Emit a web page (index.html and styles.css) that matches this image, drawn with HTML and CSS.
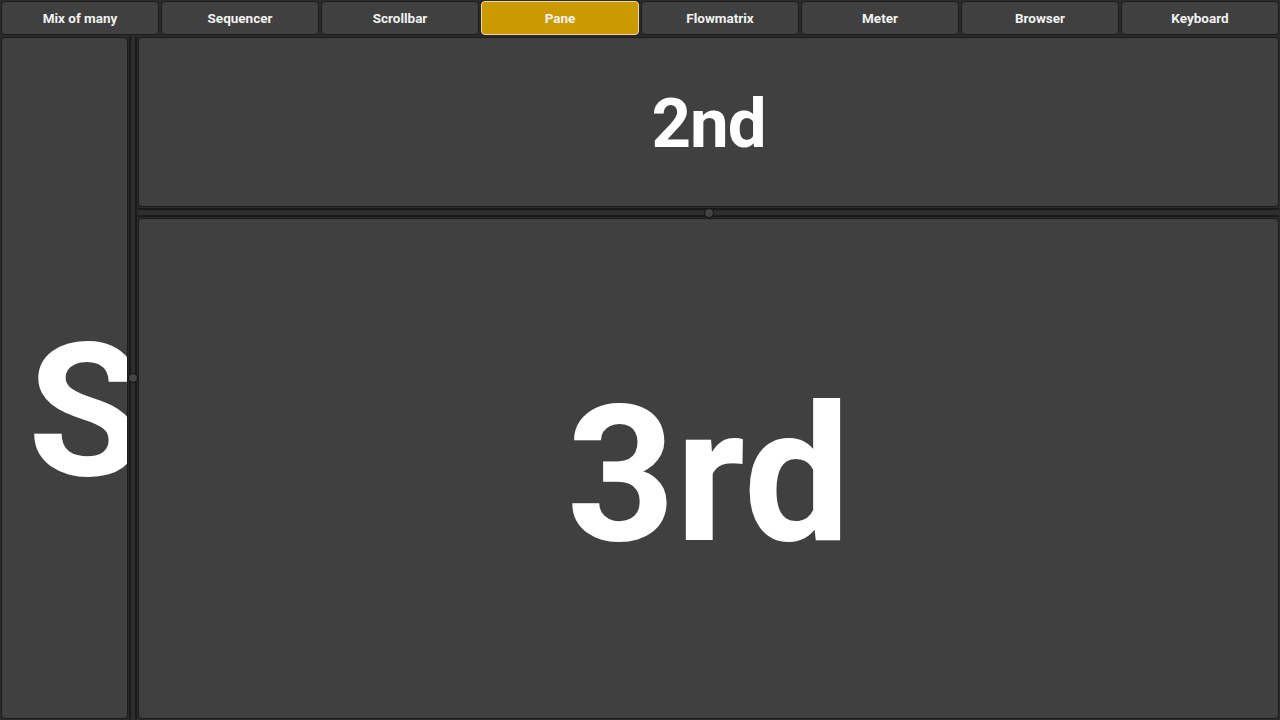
FILE: index.html
```html
<!DOCTYPE html>
<html>
<head>
<meta charset="utf-8">
<link rel="stylesheet" href="styles.css">
</head>
<body>
<nav class="tabs">
  <div class="tab">Mix of many</div>
  <div class="tab">Sequencer</div>
  <div class="tab">Scrollbar</div>
  <div class="tab active">Pane</div>
  <div class="tab">Flowmatrix</div>
  <div class="tab">Meter</div>
  <div class="tab">Browser</div>
  <div class="tab">Keyboard</div>
</nav>
<main class="main">
  <section class="pane pane-side"><span class="side-label">Side</span></section>
  <div class="splitter splitter-v"><span class="knob"></span></div>
  <div class="column">
    <section class="pane pane-second"><span class="label-2">2nd</span></section>
    <div class="splitter splitter-h"><span class="knob"></span></div>
    <section class="pane pane-third"><span class="label-3">3rd</span></section>
  </div>
</main>
</body>
</html>
```
FILE: styles.css
```css
* { box-sizing: border-box; }
html, body { margin: 0; padding: 0; }
body {
  width: 1280px;
  height: 720px;
  overflow: hidden;
  background: #2a2a2a;
  font-family: Roboto, "Liberation Sans", sans-serif;
  color: #fff;
  display: flex;
  flex-direction: column;
}
.tabs {
  display: grid;
  grid-template-columns: repeat(8, 158px);
  gap: 2px;
  padding: 1px;
  height: 36px;
}
.tab {
  height: 34px;
  background: #404040;
  border: 1px solid #1c1c1c;
  border-radius: 4px;
  display: flex;
  align-items: center;
  justify-content: center;
  font-size: 13.5px;
  font-weight: 700;
  color: #f2f2f2;
}
.tab.active {
  background: #cc9a00;
  border-color: #e8d8a8;
}
.main {
  flex: 1;
  display: flex;
  padding: 1px;
  min-height: 0;
}
.pane {
  background: #404040;
  border: 1px solid #1c1c1c;
  border-radius: 4px;
  overflow: hidden;
  font-weight: 700;
  line-height: 1;
}
.pane-side {
  width: 127px;
  padding: 280px 0 0 26px;
  white-space: nowrap;
}
.side-label { font-size: 186px; }
.column {
  flex: 1;
  display: flex;
  flex-direction: column;
  min-width: 0;
}
.pane-second {
  height: 170px;
  display: flex;
  align-items: center;
  justify-content: center;
}
.label-2 { font-size: 69px; letter-spacing: -1px; padding-top: 2px; }
.pane-third {
  flex: 1;
  display: flex;
  align-items: center;
  justify-content: center;
}
.label-3 { font-size: 190px; padding-top: 12px; }
.splitter {
  position: relative;
  display: flex;
  align-items: center;
  justify-content: center;
  background: #2a2a2a;
}
.splitter-v {
  width: 10px;
}
.splitter-v::before {
  content: "";
  position: absolute;
  top: 0; bottom: 0;
  left: 1px; right: 1px;
  border-left: 2px solid #1a1a1a;
  border-right: 2px solid #1a1a1a;
  background: #2e2e2e;
}
.splitter-h {
  height: 11px;
}
.splitter-h::before {
  content: "";
  position: absolute;
  left: 0; right: 0;
  top: 1px; bottom: 1px;
  border-top: 2px solid #1a1a1a;
  border-bottom: 2px solid #1a1a1a;
  background: #2e2e2e;
}
.knob {
  position: relative;
  flex: none;
  width: 10px;
  height: 10px;
  border-radius: 50%;
  background: #444444;
  border: 1px solid #121212;
}
```
